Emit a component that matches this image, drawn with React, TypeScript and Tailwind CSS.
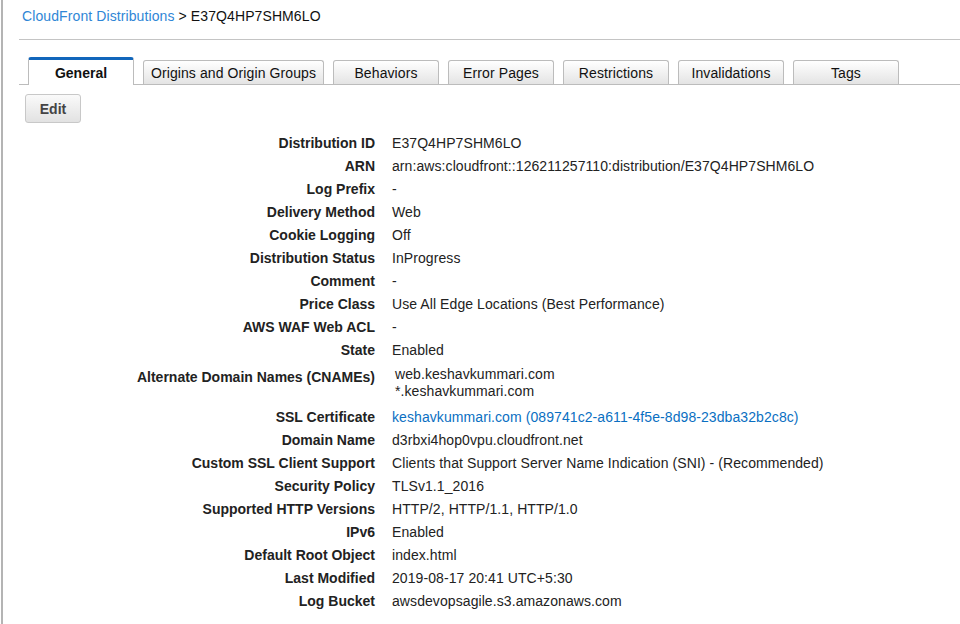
const rows: { label: string; value: React.ReactNode; tall?: boolean }[] = [
  { label: "Distribution ID", value: "E37Q4HP7SHM6LO" },
  { label: "ARN", value: "arn:aws:cloudfront::126211257110:distribution/E37Q4HP7SHM6LO" },
  { label: "Log Prefix", value: "-" },
  { label: "Delivery Method", value: "Web" },
  { label: "Cookie Logging", value: "Off" },
  { label: "Distribution Status", value: "InProgress" },
  { label: "Comment", value: "-" },
  { label: "Price Class", value: "Use All Edge Locations (Best Performance)" },
  { label: "AWS WAF Web ACL", value: "-" },
  { label: "State", value: "Enabled" },
  {
    label: "Alternate Domain Names (CNAMEs)",
    tall: true,
    value: (
      <div className="pl-[3px] leading-[17px]">
        <div>web.keshavkummari.com</div>
        <div>*.keshavkummari.com</div>
      </div>
    ),
  },
  {
    label: "SSL Certificate",
    value: (
      <a className="text-[#0a6fc2]">
        keshavkummari.com (089741c2-a611-4f5e-8d98-23dba32b2c8c)
      </a>
    ),
  },
  { label: "Domain Name", value: "d3rbxi4hop0vpu.cloudfront.net" },
  { label: "Custom SSL Client Support", value: "Clients that Support Server Name Indication (SNI) - (Recommended)" },
  { label: "Security Policy", value: "TLSv1.1_2016" },
  { label: "Supported HTTP Versions", value: "HTTP/2, HTTP/1.1, HTTP/1.0" },
  { label: "IPv6", value: "Enabled" },
  { label: "Default Root Object", value: "index.html" },
  { label: "Last Modified", value: "2019-08-17 20:41 UTC+5:30" },
  { label: "Log Bucket", value: "awsdevopsagile.s3.amazonaws.com" },
];

const tabs = [
  { name: "General", w: "w-[106px]" },
  { name: "Origins and Origin Groups", w: "w-[181px]" },
  { name: "Behaviors", w: "w-[106px]" },
  { name: "Error Pages", w: "w-[106px]" },
  { name: "Restrictions", w: "w-[106px]" },
  { name: "Invalidations", w: "w-[106px]" },
  { name: "Tags", w: "w-[106px]" },
];

export default function App() {
  return (
    <div className="h-[624px] overflow-hidden bg-white font-['Liberation_Sans',Arial,sans-serif] text-[14px] text-[#222]">
      <div className="ml-px h-full border-l-2 border-[#b4b4b4] pl-[16px]">
        {/* breadcrumb */}
        <div className="h-[40px] border-b border-[#c4c4c4] pl-[3px] pt-[6px] leading-[20px] tracking-[0.1px]">
          <a className="text-[#2f86d6]">CloudFront Distributions</a>
          <span className="text-[#111]"> &gt; E37Q4HP7SHM6LO</span>
        </div>

        {/* tabs */}
        <div className="mt-[17px] flex items-end gap-[9px] border-b border-[#bcbcbc] pl-[9px]">
          {tabs.map((t, i) =>
            i === 0 ? (
              <div
                key={t.name}
                className={`${t.w} relative -mb-px flex h-[28px] items-center justify-center rounded-t-[3px] border-x border-t-[3px] border-x-[#bcbcbc] border-t-[#1166bb] bg-white pt-[2px] font-bold text-[#111]`}
              >
                {t.name}
              </div>
            ) : (
              <div
                key={t.name}
                className={`${t.w} flex h-[24px] items-center justify-center rounded-t-[3px] border-x border-t border-[#bcbcbc] bg-linear-to-b from-white to-[#e4e4e4] pt-[2px] tracking-[0.1px] text-[#111]`}
              >
                {t.name}
              </div>
            )
          )}
        </div>

        {/* edit */}
        <div className="ml-[6px] mt-[9px] flex h-[29px] w-[56px] items-center justify-center rounded-[3px] border border-[#c8c8c8] bg-linear-to-b from-[#fafafa] to-[#e2e2e2] pt-[2px] font-bold text-[#444]">
          Edit
        </div>

        {/* details */}
        <div className="mt-[9px]">
          {rows.map((r) => (
            <div
              key={r.label}
              className={`flex ${r.tall ? "h-[44px] pt-[4px]" : "h-[23px]"}`}
            >
              <div className="w-[356px] shrink-0 text-right font-bold leading-[23px] text-[#222]">
                {r.label}
              </div>
              <div className={`pl-[17px] ${r.tall ? "" : "leading-[23px]"} whitespace-nowrap tracking-[0.08px] text-[#222]`}>
                {r.value}
              </div>
            </div>
          ))}
        </div>
      </div>
    </div>
  );
}
